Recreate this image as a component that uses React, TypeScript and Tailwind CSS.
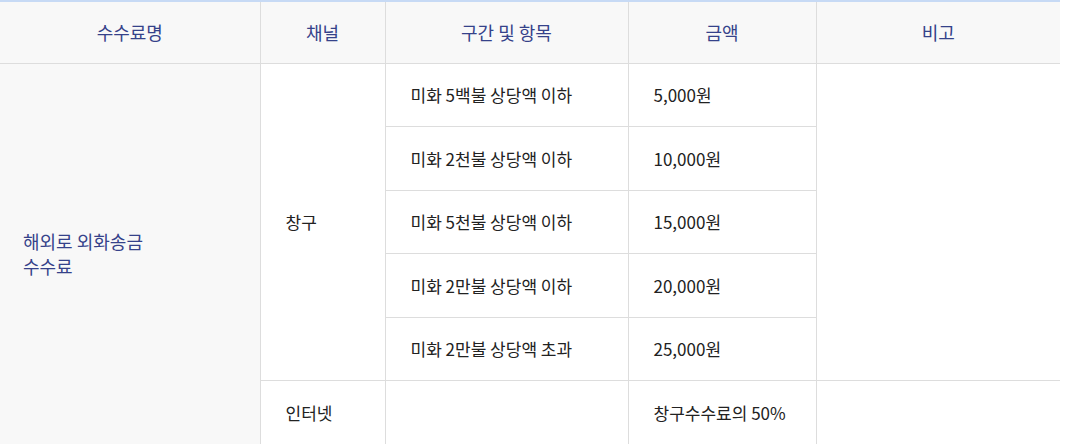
const font = { fontFamily: '"Malgun Gothic", "Noto Sans CJK KR", "Noto Sans", sans-serif' };

const FeeTable = () => {
  const windowRows = [
    { item: "미화 5백불 상당액 이하", amount: "5,000원" },
    { item: "미화 2천불 상당액 이하", amount: "10,000원" },
    { item: "미화 5천불 상당액 이하", amount: "15,000원" },
    { item: "미화 2만불 상당액 이하", amount: "20,000원" },
    { item: "미화 2만불 상당액 초과", amount: "25,000원" },
  ];

  const th =
    "h-[62px] bg-[#f8f8f8] border-b border-r border-[#dddddd] text-[18px] font-normal text-[#35428a] text-center";
  const td = "h-[63.6px] border-b border-r border-[#dddddd] pl-[25px] text-[17px] text-[#222222]";

  return (
    <table className="w-[1060px] table-fixed border-collapse border-t-2 border-t-[#c7daf5]" style={font}>
      <colgroup>
        <col className="w-[260px]" />
        <col className="w-[125px]" />
        <col className="w-[243px]" />
        <col className="w-[188px]" />
        <col className="w-[244px]" />
      </colgroup>
      <thead>
        <tr>
          <th className={th}>수수료명</th>
          <th className={th}>채널</th>
          <th className={th}>구간 및 항목</th>
          <th className={th}>금액</th>
          <th className={`${th} border-r-0`}>비고</th>
        </tr>
      </thead>
      <tbody>
        {windowRows.map((row, i) => (
          <tr key={i}>
            {i === 0 && (
              <th
                rowSpan={6}
                className="bg-[#f8f8f8] border-b border-r border-[#dddddd] pl-[23px] text-left align-middle text-[18px] font-normal leading-[25px] text-[#35428a]"
              >
                해외로 외화송금
                <br />
                수수료
              </th>
            )}
            {i === 0 && (
              <td rowSpan={5} className={td}>
                창구
              </td>
            )}
            <td className={td}>{row.item}</td>
            <td className={td}>{row.amount}</td>
            {i === 0 && <td rowSpan={5} className={`${td} border-r-0`}></td>}
          </tr>
        ))}
        <tr>
          <td className={td}>인터넷</td>
          <td className={td}></td>
          <td className={td}>창구수수료의 50%</td>
          <td className={`${td} border-r-0`}></td>
        </tr>
      </tbody>
    </table>
  );
};

export default function App() {
  return (
    <div className="bg-white w-[1073px] h-[444px] overflow-hidden">
      <FeeTable />
    </div>
  );
}
